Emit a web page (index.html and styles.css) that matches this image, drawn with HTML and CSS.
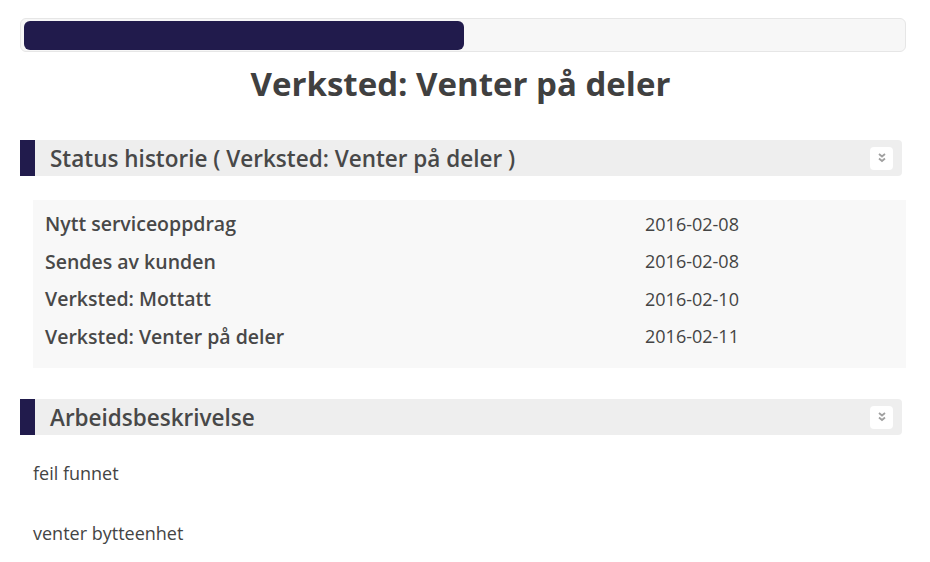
FILE: index.html
```html
<!DOCTYPE html>
<html lang="no">
<head>
    <meta charset="UTF-8">
    <title>Serviceoppdrag</title>
    <link rel="stylesheet" href="styles.css">
</head>
<body>
    <div class="container">
        <div class="progress">
            <div class="progress-bar" style="width: 50%"></div>
        </div>

        <h1>Verksted: Venter på deler</h1>

        <div class="section-header">
            <h2>Status historie ( Verksted: Venter på deler )</h2>
            <span class="toggle">
                <svg width="12" height="12" viewBox="0 0 12 12"><path d="M3 2 L6 4.5 L9 2 M3 6.5 L6 9 L9 6.5" fill="none" stroke="#a0a0a0" stroke-width="1.8"/></svg>
            </span>
        </div>

        <table class="history">
            <tr><td class="label">Nytt serviceoppdrag</td><td>2016-02-08</td></tr>
            <tr><td class="label">Sendes av kunden</td><td>2016-02-08</td></tr>
            <tr><td class="label">Verksted: Mottatt</td><td>2016-02-10</td></tr>
            <tr><td class="label">Verksted: Venter på deler</td><td>2016-02-11</td></tr>
        </table>

        <div class="section-header">
            <h2>Arbeidsbeskrivelse</h2>
            <span class="toggle">
                <svg width="12" height="12" viewBox="0 0 12 12"><path d="M3 2 L6 4.5 L9 2 M3 6.5 L6 9 L9 6.5" fill="none" stroke="#a0a0a0" stroke-width="1.8"/></svg>
            </span>
        </div>

        <div class="description">
            <p>feil funnet</p>
            <p>venter bytteenhet</p>
        </div>
    </div>
</body>
</html>
```

FILE: styles.css
```css
body {
    font-family: "Open Sans", sans-serif;
    margin: 0;
    padding: 18px 24px 0 20px;
    background-color: white;
    color: #444;
}
.progress {
    height: 34px;
    box-sizing: border-box;
    padding: 2px;
    background-color: #f7f7f7;
    border: 1px solid #e6e6e6;
    border-radius: 6px;
}
.progress-bar {
    height: 29px;
    margin: 0 0 0 1px;
    background-color: #211b4c;
    border-radius: 6px;
}
h1 {
    text-align: center;
    font-size: 33px;
    font-weight: 700;
    margin: 10px 5px 34px 0;
    line-height: 44px;
    color: #404040;
}
.section-header {
    display: flex;
    align-items: center;
    height: 36px;
    margin-right: 4px;
    background-color: #eeeeee;
    border-left: 15px solid #211b4c;
    border-radius: 0 4px 4px 0;
}
.section-header h2 {
    flex: 1;
    margin: 0 0 0 15px;
    font-size: 22.5px;
    font-weight: 600;
    color: #484848;
}
.toggle {
    width: 23px;
    height: 23px;
    margin-right: 9px;
    background-color: white;
    border-radius: 4px;
    display: flex;
    align-items: center;
    justify-content: center;
}
.history {
    width: calc(100% - 13px);
    margin: 24px 0 31px 13px;
    border-collapse: collapse;
    background-color: #f8f8f8;
    font-size: 18px;
}
.history tr:first-child td {
    padding-top: 5px;
}
.history tr:last-child td {
    padding-bottom: 13px;
}
.history td {
    height: 37.5px;
    padding: 0;
    vertical-align: middle;
    color: #444;
}
.history td.label {
    width: 600px;
    padding-left: 12px;
    font-size: 19.5px;
    font-weight: 600;
    color: #484848;
}
.description {
    padding: 26px 13px 0;
    font-size: 18px;
}
.description p {
    margin: 0 0 36px;
    line-height: 24px;
}
```
